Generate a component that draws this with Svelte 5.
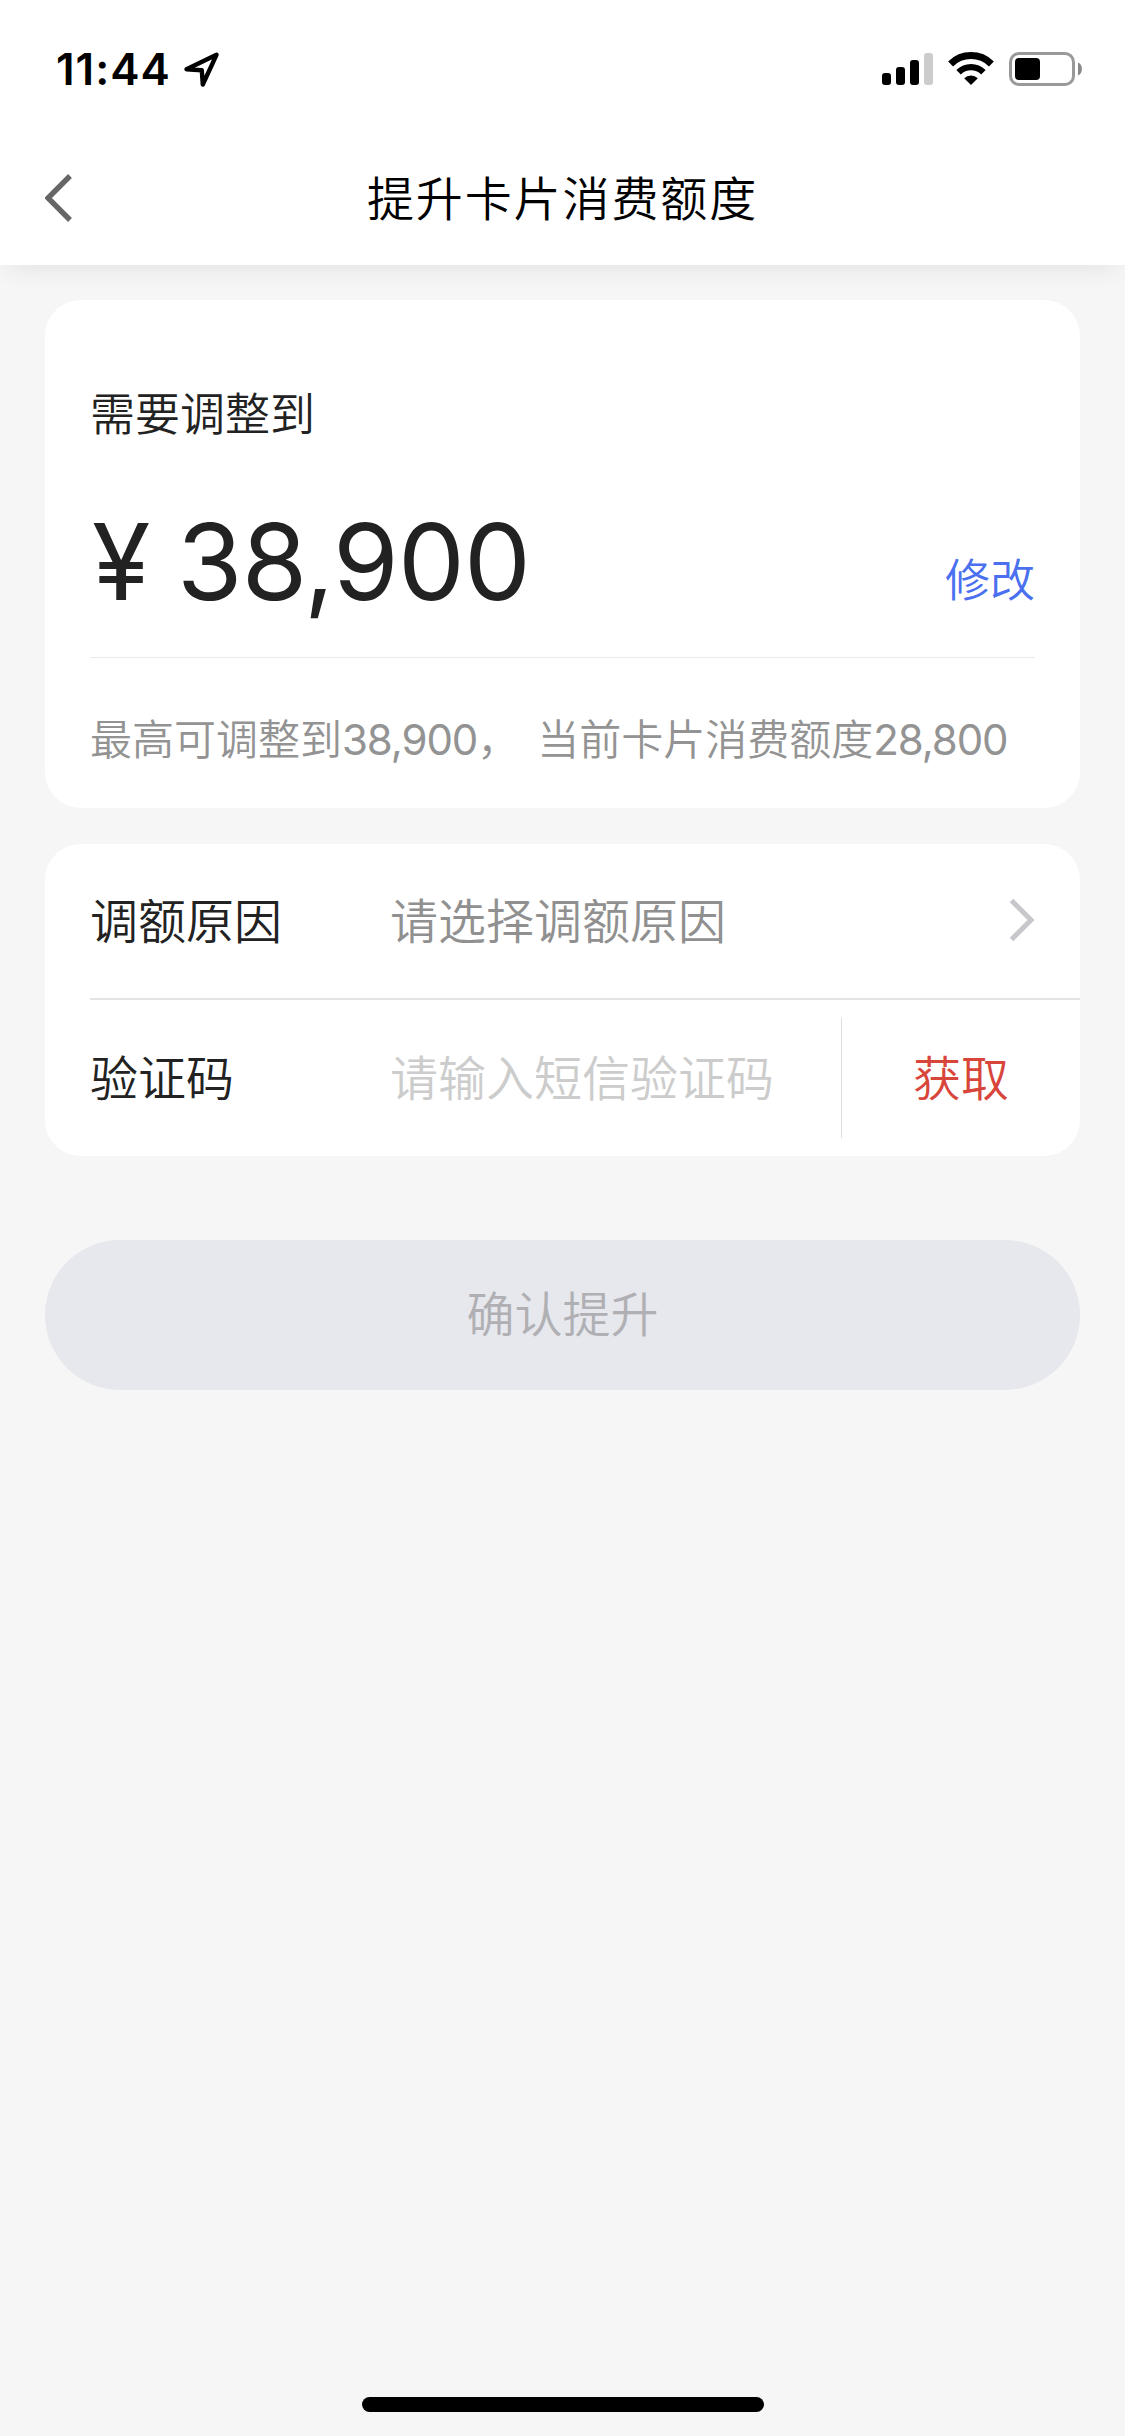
<script lang="ts">
  let targetAmount = 38900
  let maxAmount = 38900
  let currentLimit = 28800
  let reason = ''
  let code = ''

  const bars = [12, 18, 25, 32]

  function formatAmount(n: number): string {
    return n.toString().replace(/\B(?=(\d{3})+$)/g, ',')
  }

  $: canSubmit = reason !== '' && code !== ''
</script>

<div class="page">
  <header class="header">
    <div class="status-bar">
      <div class="status-left">
        <span class="time">11:44</span>
        <svg class="location" viewBox="0 0 36 36" width="36" height="36">
          <path d="M2.5 17.2 L32.5 2.8 L18.8 32.5 L17.8 18.3 Z" fill="none" stroke="#000" stroke-width="4.4" stroke-linejoin="round" />
        </svg>
      </div>
      <div class="status-right">
        <div class="signal">
          {#each bars as height, i}
            <span class="bar" class:off={i === 3} style="height: {height}px"></span>
          {/each}
        </div>
        <svg class="wifi" viewBox="0 0 46 33" width="46" height="33">
          <path d="M2.6 12 A29 29 0 0 1 43.4 12" fill="none" stroke="#000" stroke-width="7" />
          <path d="M10.6 20.2 A17.6 17.6 0 0 1 35.4 20.2" fill="none" stroke="#000" stroke-width="6.4" />
          <path d="M23 33 L16.2 26.2 A9.8 9.8 0 0 1 29.8 26.2 Z" fill="#000" />
        </svg>
        <svg class="battery" viewBox="0 0 74 34" width="74" height="34">
          <rect x="1.5" y="1.5" width="63" height="31" rx="8.5" fill="none" stroke="#999" stroke-width="3" />
          <rect x="6" y="6" width="25" height="22" rx="4" fill="#000" />
          <path d="M69 10.5 C74.2 12.5 74.2 21.5 69 23.5 Z" fill="#888" />
        </svg>
      </div>
    </div>
    <div class="nav">
      <svg class="back" viewBox="0 0 28 48" width="28" height="48">
        <path d="M25 2 L3 24 L25 46" fill="none" stroke="#666" stroke-width="5.4" />
      </svg>
      <h1>提升卡片消费额度</h1>
    </div>
  </header>

  <main>
    <section class="card amount-card">
      <div class="label">需要调整到</div>
      <div class="amount-row">
        <div class="amount"><span class="yen">¥</span><span class="number">{formatAmount(targetAmount)}</span></div>
        <span class="edit">修改</span>
      </div>
      <div class="hint">
        <span>最高可调整到<span class="digits">{formatAmount(maxAmount)}</span>，</span>
        <span>当前卡片消费额度<span class="digits">{formatAmount(currentLimit)}</span></span>
      </div>
    </section>

    <section class="card form-card">
      <div class="row reason-row">
        <span class="name">调额原因</span>
        <span class="value">请选择调额原因</span>
        <svg class="arrow" viewBox="0 0 26 44" width="26" height="44">
          <path d="M2.5 2.5 L22 22 L2.5 41.5" fill="none" stroke="#c8c8cc" stroke-width="5" />
        </svg>
      </div>
      <div class="row">
        <span class="name">验证码</span>
        <span class="value placeholder">请输入短信验证码</span>
        <span class="get-code">获取</span>
      </div>
    </section>

    <button class="submit" disabled={!canSubmit}>确认提升</button>
  </main>

  <div class="home-indicator"></div>
</div>

<style>
  :global(body) {
    background: #f6f6f6;
  }

  .page {
    display: flex;
    flex-direction: column;
    width: 1125px;
    height: 2436px;
    overflow: hidden;
    background: #f6f6f6;
    color: #222;
    font-family: 'Noto Sans CJK SC', sans-serif;
    font-weight: 350;
  }

  .header {
    flex: none;
    height: 265px;
    background: #fff;
    box-shadow: 0 12px 24px -8px rgba(0, 0, 0, 0.08);
  }

  .status-bar {
    display: flex;
    justify-content: space-between;
    height: 132px;
    box-sizing: border-box;
    padding: 52px 42px 0 56px;
  }

  .status-left,
  .status-right {
    display: flex;
    align-items: flex-start;
  }

  .time {
    width: 128px;
    font-family: Inter, sans-serif;
    font-size: 44px;
    font-weight: 600;
    line-height: 34px;
    letter-spacing: 1px;
    color: #000;
  }

  .signal {
    display: flex;
    align-items: flex-end;
    gap: 5px;
    height: 33px;
    margin-right: 15px;
  }

  .bar {
    width: 9px;
    border-radius: 3px;
    background: #000;
  }

  .bar.off {
    background: #ccc;
  }

  .wifi {
    margin-right: 15px;
  }

  .nav {
    display: flex;
    align-items: center;
    height: 132px;
    padding: 0 45px;
  }

  .nav h1 {
    flex: 1;
    margin: 0 28px 4px 0;
    font-size: 47px;
    font-weight: 350;
    line-height: 68px;
    letter-spacing: 1.9px;
    text-align: center;
    color: #000;
  }

  main {
    flex: 1;
    padding: 35px 45px 0;
  }

  .card {
    box-sizing: border-box;
    border-radius: 36px;
    background: #fff;
  }

  .amount-card {
    height: 508px;
    padding: 78px 45px 0;
  }

  .label {
    font-size: 45px;
    line-height: 68px;
  }

  .amount-row {
    display: flex;
    justify-content: space-between;
    align-items: flex-end;
    height: 211px;
    border-bottom: 1px solid #eaeaea;
  }

  .amount {
    display: flex;
    height: 160px;
    font-family: Inter, sans-serif;
    font-size: 106px;
    font-weight: 400;
    line-height: 130px;
    letter-spacing: -0.8px;
  }

  .yen {
    width: 85px;
    padding-left: 2px;
  }

  .edit {
    height: 113px;
    font-size: 45px;
    line-height: 68px;
    color: #4a70f0;
  }

  .hint {
    display: flex;
    gap: 18px;
    margin-top: 47px;
    font-size: 42px;
    line-height: 63px;
    color: #939393;
    white-space: nowrap;
  }

  .digits {
    font-family: Inter, sans-serif;
    font-weight: 400;
    letter-spacing: -1.1px;
  }

  .form-card {
    height: 312px;
    margin-top: 36px;
    padding-left: 45px;
    font-size: 48px;
  }

  .row {
    display: flex;
    align-items: center;
    height: 156px;
    box-sizing: border-box;
  }

  .reason-row {
    border-bottom: 2px solid #e4e4e6;
  }

  .name,
  .value {
    padding-bottom: 7px;
  }

  .name {
    width: 300px;
  }

  .value {
    flex: 1;
    color: #909090;
  }

  .value.placeholder {
    color: #ccc;
  }

  .arrow {
    margin: 0 45px 2px 0;
  }

  .get-code {
    width: 239px;
    height: 120px;
    box-sizing: border-box;
    border-left: 1px solid #e0e0e0;
    line-height: 114px;
    text-align: center;
    color: #d8453a;
  }

  .submit {
    display: block;
    width: 100%;
    height: 150px;
    margin-top: 84px;
    padding: 0 0 8px;
    border: none;
    border-radius: 75px;
    background: #e7e8ed;
    color: #b0b0b4;
    font-family: inherit;
    font-size: 48px;
    font-weight: 350;
  }

  .home-indicator {
    width: 402px;
    height: 15px;
    margin: 0 auto 24px;
    border-radius: 8px;
    background: #000;
  }
</style>
